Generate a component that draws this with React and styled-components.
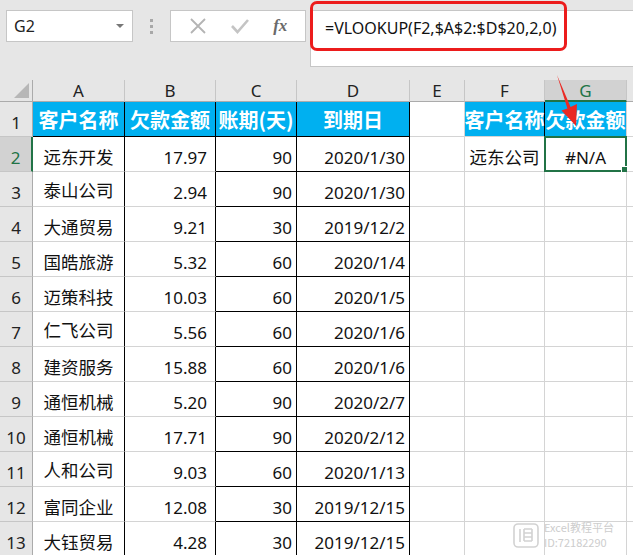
import React from 'react';
import styled, { createGlobalStyle, css } from 'styled-components';

const GlobalStyle = createGlobalStyle`
  html, body { margin: 0; padding: 0; background: #e6e6e6; }
  body { font-family: "Noto Sans", "Noto Sans CJK SC", sans-serif; }
  * { box-sizing: border-box; }
`;

const GRID = '#d4d4d4';
const BLACK = '#000';
const BLUE = '#00b0f0';
const GREEN = '#217346';

const Page = styled.div`
  position: relative;
  width: 633px;
  height: 555px;
  overflow: hidden;
  background: #e6e6e6;
  display: flex;
  flex-direction: column;
`;

const Toolbar = styled.div`
  position: relative;
  height: 80px;
  flex: none;
  display: flex;
  align-items: flex-start;
  padding: 10px 0 0 6px;
`;

const NameBox = styled.div`
  width: 127px;
  height: 32px;
  background: #fff;
  border: 1px solid #c6c6c6;
  display: flex;
  align-items: center;
  justify-content: space-between;
  padding: 0 8px 0 7px;
  font-size: 16px;
  color: #222;
`;

const Caret = styled.span`
  width: 0;
  height: 0;
  border-left: 4px solid transparent;
  border-right: 4px solid transparent;
  border-top: 4px solid #777;
`;

const Dots = styled.div`
  width: 37px;
  height: 32px;
  display: flex;
  flex-direction: column;
  align-items: center;
  justify-content: center;
  gap: 3px;
  & > span { width: 3px; height: 3px; background: #a8a8a8; }
`;

const FxBox = styled.div`
  width: 136px;
  height: 32px;
  background: #fff;
  border: 1px solid #c6c6c6;
  display: flex;
  align-items: center;
  justify-content: space-around;
  padding: 0 6px;
`;

const FxText = styled.span`
  font-family: "Liberation Serif", "DejaVu Serif", serif;
  font-style: italic;
  font-weight: bold;
  font-size: 17px;
  color: #6a6a6a;
`;

const FormulaBar = styled.div`
  margin-left: 4px;
  flex: 1;
  height: 57px;
  background: #fff;
  border: 1px solid #c6c6c6;
  border-right: none;
  padding: 6px 0 0 14px;
  font-size: 16px;
  color: #111;
  line-height: 22px;
`;

const RedFrame = styled.div`
  position: absolute;
  left: 310px;
  top: 1px;
  width: 257px;
  height: 50px;
  border: 3px solid #ec1c1c;
  border-radius: 7px;
  pointer-events: none;
`;

const Sheet = styled.div`
  flex: none;
  display: grid;
  grid-template-columns: 33px 92px 91px 81px 113px 55px 80px 82px 1fr;
  grid-template-rows: 22px repeat(13, 35px);
  background: #fff;
`;

const Corner = styled.div`
  position: relative;
  background: #e6e6e6;
  border-right: 1px solid #ababab;
  border-bottom: 1px solid #ababab;
  &::after {
    content: '';
    position: absolute;
    right: 3px;
    bottom: 3px;
    width: 0;
    height: 0;
    border-left: 15px solid transparent;
    border-bottom: 15px solid #b7b7b7;
  }
`;

const ColHead = styled.div`
  background: ${p => (p.$sel ? '#d2d2d2' : '#e6e6e6')};
  color: ${p => (p.$sel ? GREEN : '#222')};
  border-right: 1px solid #c6c6c6;
  border-bottom: ${p => (p.$sel ? `2px solid ${GREEN}` : '1px solid #ababab')};
  display: flex;
  align-items: center;
  justify-content: center;
  font-size: 17px;
`;

const RowHead = styled.div`
  background: ${p => (p.$sel ? '#d2d2d2' : '#e6e6e6')};
  color: ${p => (p.$sel ? GREEN : '#222')};
  border-right: ${p => (p.$sel ? `2px solid ${GREEN}` : '1px solid #ababab')};
  border-bottom: 1px solid #c6c6c6;
  display: flex;
  align-items: flex-end;
  justify-content: center;
  padding-bottom: 2px;
  font-size: 17px;
`;

const Cell = styled.div`
  position: relative;
  background: ${p => p.$bg || '#fff'};
  border-right: 1px solid ${p => p.$br || GRID};
  border-bottom: 1px solid ${p => p.$bb || GRID};
  display: flex;
  justify-content: ${p => p.$align || 'center'};
  align-items: ${p => p.$valign || 'flex-end'};
  padding: 0 ${p => p.$pr ?? 4}px ${p => (p.$valign === 'center' ? 0 : 2)}px 4px;
  font-size: 17px;
  color: #111;
  white-space: nowrap;
  ${p =>
    p.$cjk &&
    css`
      font-family: "Noto Sans CJK SC", sans-serif;
      font-size: 17.5px;
    `}
  ${p =>
    p.$head &&
    css`
      font-family: "Noto Sans CJK SC", sans-serif;
      font-weight: bold;
      font-size: 20px;
      color: #fff;
    `}
`;

const Selection = styled.div`
  position: absolute;
  left: -1px;
  top: -1px;
  right: -1px;
  bottom: -1px;
  border: 2px solid ${GREEN};
  pointer-events: none;
  &::after {
    content: '';
    position: absolute;
    right: -4px;
    bottom: -4px;
    width: 6px;
    height: 6px;
    background: ${GREEN};
    border: 1px solid #fff;
  }
`;

const Arrow = styled.svg`
  position: absolute;
  left: 548px;
  top: 70px;
  pointer-events: none;
`;

const Watermark = styled.div`
  position: absolute;
  left: 513px;
  top: 520px;
  display: flex;
  align-items: center;
  gap: 5px;
`;

const WmText = styled.div`
  display: flex;
  flex-direction: column;
  font-family: "Noto Sans CJK SC", sans-serif;
  font-size: 11px;
  line-height: 15px;
  color: #cdcdcd;
`;

const rows = [
  ['远东开发', '17.97', '90', '2020/1/30'],
  ['泰山公司', '2.94', '90', '2020/1/30'],
  ['大通贸易', '9.21', '30', '2019/12/2'],
  ['国皓旅游', '5.32', '60', '2020/1/4'],
  ['迈策科技', '10.03', '60', '2020/1/5'],
  ['仁飞公司', '5.56', '60', '2020/1/6'],
  ['建资服务', '15.88', '60', '2020/1/6'],
  ['通恒机械', '5.20', '90', '2020/2/7'],
  ['通恒机械', '17.71', '90', '2020/2/12'],
  ['人和公司', '9.03', '60', '2020/1/13'],
  ['富同企业', '12.08', '30', '2019/12/15'],
  ['大钰贸易', '4.28', '30', '2019/12/15'],
];

const raised = new Set([1, 5, 9]);

export default function App() {
  return (
    <Page>
      <GlobalStyle />
      <Toolbar>
        <NameBox>
          <span>G2</span>
          <Caret />
        </NameBox>
        <Dots>
          <span />
          <span />
          <span />
        </Dots>
        <FxBox>
          <svg width="18" height="18" viewBox="0 0 18 18">
            <path d="M2 2 L16 16 M16 2 L2 16" stroke="#b4b4b4" strokeWidth="1.8" fill="none" />
          </svg>
          <svg width="20" height="18" viewBox="0 0 20 18">
            <path d="M2 9 L7.5 15 L18 3" stroke="#c4c4c4" strokeWidth="2.6" fill="none" />
          </svg>
          <FxText>fx</FxText>
        </FxBox>
        <FormulaBar>=VLOOKUP(F2,$A$2:$D$20,2,0)</FormulaBar>
        <RedFrame />
      </Toolbar>

      <Sheet>
        <Corner />
        {['A', 'B', 'C', 'D', 'E', 'F', 'G', 'H'].map(c => (
          <ColHead key={c} $sel={c === 'G'}>
            {c === 'H' ? '' : c}
          </ColHead>
        ))}

        <RowHead>1</RowHead>
        <Cell $bg={BLUE} $head $br={BLACK} $bb={BLACK}>客户名称</Cell>
        <Cell $bg={BLUE} $head $br={BLACK} $bb={BLACK}>欠款金额</Cell>
        <Cell $bg={BLUE} $head $br={BLACK} $bb={BLACK}>账期(天)</Cell>
        <Cell $bg={BLUE} $head $br={BLACK} $bb={BLACK}>到期日</Cell>
        <Cell />
        <Cell $bg={BLUE} $head $br={BLACK}>客户名称</Cell>
        <Cell $bg={BLUE} $head>欠款金额</Cell>
        <Cell />

        {rows.map((r, i) => (
          <React.Fragment key={i}>
            <RowHead $sel={i === 0}>{i + 2}</RowHead>
            <Cell $cjk $br={BLACK} $valign={raised.has(i) ? 'center' : 'flex-end'}>
              {r[0]}
            </Cell>
            <Cell $align="flex-end" $pr={8} $br={BLACK}>{r[1]}</Cell>
            <Cell $align="flex-end" $br={BLACK} $bb={BLACK}>{r[2]}</Cell>
            <Cell $align="flex-end" $br={BLACK} $bb={BLACK}>{r[3]}</Cell>
            <Cell />
            {i === 0 ? (
              <>
                <Cell $cjk>远东公司</Cell>
                <Cell>
                  #N/A
                  <Selection />
                </Cell>
              </>
            ) : (
              <>
                <Cell />
                <Cell />
              </>
            )}
            <Cell />
          </React.Fragment>
        ))}
      </Sheet>

      <Arrow width="40" height="64" viewBox="0 0 40 64">
        <polygon
          points="9,5 22.6,37 29,34 28,56 13.5,40.5 19.4,38.6"
          fill="#ea2a24"
        />
      </Arrow>

      <Watermark>
        <svg width="26" height="25" viewBox="0 0 26 25">
          <rect x="1" y="1" width="24" height="23" rx="4" fill="none" stroke="#d2d2d2" strokeWidth="1.6" />
          <path d="M7 6 V19 M11 6 H19 M11 10 H19 M11 14 H19 M11 18 H19 M11 6 V18 M19 6 V18" stroke="#d2d2d2" strokeWidth="1.6" fill="none" />
        </svg>
        <WmText>
          <span>Excel教程平台</span>
          <span>ID:72182290</span>
        </WmText>
      </Watermark>
    </Page>
  );
}
